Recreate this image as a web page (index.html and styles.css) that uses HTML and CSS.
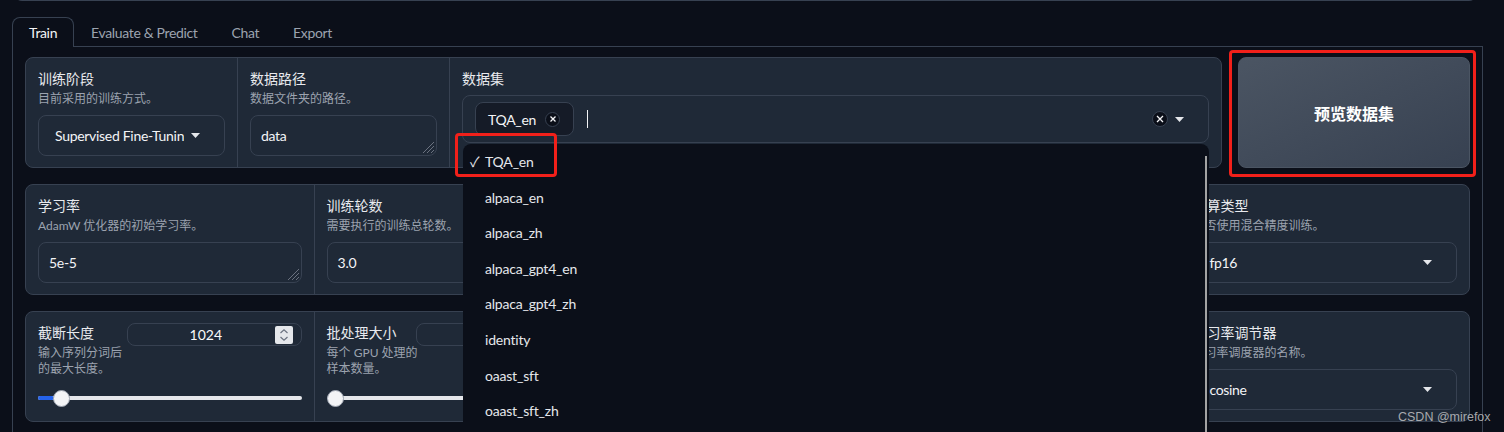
FILE: index.html
```html
<!DOCTYPE html>
<html lang="zh">
<head>
<meta charset="utf-8">
<title>LLaMA Board</title>
<link rel="stylesheet" href="styles.css">
</head>
<body>
<div class="page">
  <div class="topbox"></div>
  <div class="tabnav">
    <div class="tab sel">Train</div>
    <div class="tab">Evaluate &amp; Predict</div>
    <div class="tab">Chat</div>
    <div class="tab">Export</div>
  </div>
  <div class="tabitem">
    <div class="row1">
      <div class="group g1">
        <div class="cell">
          <div class="lbl">训练阶段</div>
          <div class="info">目前采用的训练方式。</div>
          <div class="box dd"><span class="ddtext">Supervised Fine-Tuning</span><svg class="caret" width="9" height="5" viewBox="0 0 9 5"><path d="M0 0h9L4.5 5z"/></svg></div>
        </div>
        <div class="cell">
          <div class="lbl">数据路径</div>
          <div class="info">数据文件夹的路径。</div>
          <div class="box ta">data<svg class="grip" width="11" height="11" viewBox="0 0 11 11"><path d="M11 0L0 11M11 4L4 11M11 8L8 11"/></svg></div>
        </div>
        <div class="cell">
          <div class="lbl">数据集</div>
          <div class="msel">
            <div class="mbox">
              <span class="pill">TQA_en<span class="pillx"><svg width="6" height="6" viewBox="0 0 6 6"><path d="M0.5 0.5L5.5 5.5M5.5 0.5L0.5 5.5"/></svg></span></span>
              <span class="cursor"></span>
              <span class="spacer"></span>
              <span class="clear"><svg width="8" height="8" viewBox="0 0 8 8"><path d="M1 1L7 7M7 1L1 7"/></svg></span>
              <svg class="caret" width="9" height="5" viewBox="0 0 9 5"><path d="M0 0h9L4.5 5z"/></svg>
            </div>
            <div class="menu">
              <div class="opt"><span class="chk">✓</span>TQA_en</div>
              <div class="opt"><span class="chk"></span>alpaca_en</div>
              <div class="opt"><span class="chk"></span>alpaca_zh</div>
              <div class="opt"><span class="chk"></span>alpaca_gpt4_en</div>
              <div class="opt"><span class="chk"></span>alpaca_gpt4_zh</div>
              <div class="opt"><span class="chk"></span>identity</div>
              <div class="opt"><span class="chk"></span>oaast_sft</div>
              <div class="opt"><span class="chk"></span>oaast_sft_zh</div>
              <div class="scrollbar"></div>
            </div>
          </div>
        </div>
      </div>
      <button class="btn">预览数据集</button>
    </div>

    <div class="group g5">
      <div class="cell">
        <div class="lbl">学习率</div>
        <div class="info">AdamW 优化器的初始学习率。</div>
        <div class="box ta">5e-5<svg class="grip" width="11" height="11" viewBox="0 0 11 11"><path d="M11 0L0 11M11 4L4 11M11 8L8 11"/></svg></div>
      </div>
      <div class="cell">
        <div class="lbl">训练轮数</div>
        <div class="info">需要执行的训练总轮数。</div>
        <div class="box ta">3.0<svg class="grip" width="11" height="11" viewBox="0 0 11 11"><path d="M11 0L0 11M11 4L4 11M11 8L8 11"/></svg></div>
      </div>
      <div class="cell">
        <div class="lbl">最大梯度范数</div>
        <div class="info">用于梯度裁剪的范数。</div>
        <div class="box ta">1.0</div>
      </div>
      <div class="cell">
        <div class="lbl">最大样本数</div>
        <div class="info">每个数据集的最大样本数。</div>
        <div class="box ta">100000</div>
      </div>
      <div class="cell">
        <div class="lbl">计算类型</div>
        <div class="info">是否使用混合精度训练。</div>
        <div class="box dd"><span class="ddtext">fp16</span><svg class="caret" width="9" height="5" viewBox="0 0 9 5"><path d="M0 0h9L4.5 5z"/></svg></div>
      </div>
    </div>

    <div class="group g5">
      <div class="cell">
        <div class="shead">
          <div class="stext">
            <div class="lbl">截断长度</div>
            <div class="info"><span class="ln">输入序列分词后</span><span class="ln">的最大长度。</span></div>
          </div>
          <div class="num">1024<span class="spin"><svg width="18" height="18" viewBox="0 0 18 18"><path d="M5.5 7L9 3.8L12.5 7M5.5 11L9 14.2L12.5 11"/></svg></span></div>
        </div>
        <div class="slider"><div class="track"></div><div class="fill" style="width:16px"></div><div class="thumb" style="left:15px"></div></div>
      </div>
      <div class="cell">
        <div class="shead">
          <div class="stext">
            <div class="lbl">批处理大小</div>
            <div class="info"><span class="ln">每个 GPU 处理的</span><span class="ln">样本数量。</span></div>
          </div>
          <div class="num">2<span class="spin"><svg width="18" height="18" viewBox="0 0 18 18"><path d="M5.5 7L9 3.8L12.5 7M5.5 11L9 14.2L12.5 11"/></svg></span></div>
        </div>
        <div class="slider"><div class="track"></div><div class="fill" style="width:0px"></div><div class="thumb" style="left:0px"></div></div>
      </div>
      <div class="cell">
        <div class="shead">
          <div class="stext">
            <div class="lbl">梯度累积</div>
            <div class="info"><span class="ln">梯度累积的步数。</span></div>
          </div>
          <div class="num">4<span class="spin"><svg width="18" height="18" viewBox="0 0 18 18"><path d="M5.5 7L9 3.8L12.5 7M5.5 11L9 14.2L12.5 11"/></svg></span></div>
        </div>
        <div class="slider"><div class="track"></div><div class="fill" style="width:10px"></div><div class="thumb" style="left:6px"></div></div>
      </div>
      <div class="cell">
        <div class="shead">
          <div class="stext">
            <div class="lbl">验证集比例</div>
            <div class="info"><span class="ln">验证集占全部样本</span><span class="ln">的百分比。</span></div>
          </div>
          <div class="num">0<span class="spin"><svg width="18" height="18" viewBox="0 0 18 18"><path d="M5.5 7L9 3.8L12.5 7M5.5 11L9 14.2L12.5 11"/></svg></span></div>
        </div>
        <div class="slider"><div class="track"></div><div class="fill" style="width:0px"></div><div class="thumb" style="left:0px"></div></div>
      </div>
      <div class="cell">
        <div class="lbl">学习率调节器</div>
        <div class="info">学习率调度器的名称。</div>
        <div class="box dd"><span class="ddtext">cosine</span><svg class="caret" width="9" height="5" viewBox="0 0 9 5"><path d="M0 0h9L4.5 5z"/></svg></div>
      </div>
    </div>
  </div>
</div>
<div class="mark m1"></div>
<div class="mark m2"></div>
<div class="wm">CSDN @mirefox</div>
</body>
</html>
```

FILE: styles.css
```css
* { box-sizing: border-box; }

html, body {
  margin: 0;
  padding: 0;
  background: #0b0f19;
}

body {
  position: relative;
  width: 1504px;
  height: 432px;
  overflow: hidden;
  font-family: Lato, "Noto Sans CJK SC", sans-serif;
  font-size: 14px;
  color: #e5e7eb;
}

.page {
  width: 1471px;
  height: 432px;
  margin-left: 12px;
  overflow: hidden;
}

.topbox {
  height: 10px;
  margin-top: -9px;
  margin-right: 6px;
  margin-left: 2px;
  border: 1px solid #374151;
  border-top: none;
  border-radius: 0 0 8px 8px;
}

/* tabs */
.tabnav {
  display: flex;
  height: 30px;
  margin-top: 16px;
  border-bottom: 1px solid #374151;
}

.tab {
  height: 30px;
  padding: 1px 16px 0;
  line-height: 28px;
  border: 1px solid transparent;
  border-bottom: none;
  border-radius: 8px 8px 0 0;
  color: #9ca3af;
  font-size: 14px;
  letter-spacing: -0.35px;
}

.tab.sel {
  position: relative;
  z-index: 1;
  height: 30px;
  border-color: #374151;
  background: #0b0f19;
  color: #f3f4f6;
}

.tabitem {
  display: flex;
  flex-direction: column;
  gap: 16px;
  padding: 10px 12px 12px;
  border: 1px solid #374151;
  border-top: none;
  height: 420px;
}

/* rows */
.row1 {
  display: flex;
  gap: 16px;
}

.group {
  display: grid;
  background: #1f2937;
  border: 1px solid #374151;
  border-radius: 8px;
}

.g1 {
  width: 1197px;
  grid-template-columns: 212px 212px 1fr;
}

.g5 {
  grid-template-columns: repeat(5, 1fr);
}

.cell {
  padding: 11px 12px 11px;
  border-right: 1px solid #374151;
  min-width: 0;
}

.cell:last-child {
  border-right: none;
}

.lbl {
  font-size: 14px;
  line-height: 20px;
  color: #e8eaee;
  white-space: nowrap;
}

.info {
  margin-top: 2px;
  font-size: 12px;
  line-height: 16px;
  color: #9ca3af;
  white-space: nowrap;
}

.ln { display: block; }

.box {
  position: relative;
  height: 41px;
  margin-top: 8px;
  border: 1px solid #374151;
  border-radius: 8px;
  background: #1f2937;
  color: #f3f4f6;
  font-size: 14px;
  letter-spacing: -0.3px;
  display: flex;
  align-items: center;
}

.ta {
  padding: 0 10px;
}

.grip {
  position: absolute;
  right: 2px;
  bottom: 2px;
}

.grip path {
  stroke: #6b7280;
  stroke-width: 1;
  fill: none;
}

.dd {
  padding: 0 24px 0 16px;
}

.ddtext {
  flex: 1;
  overflow: hidden;
  white-space: nowrap;
  margin-right: 7px;
}

.caret {
  flex: none;
}

.caret path {
  fill: #e5e7eb;
}

/* multiselect */
.msel {
  position: relative;
  margin-top: 6px;
}

.mbox {
  height: 48px;
  border: 1px solid #374151;
  border-radius: 8px;
  background: #1f2937;
  display: flex;
  align-items: center;
  padding: 0 24px 0 12px;
}

.pill {
  display: flex;
  align-items: center;
  height: 34px;
  padding: 0 13px 0 12px;
  border: 1px solid #374151;
  border-radius: 8px;
  background: #151b27;
  color: #f3f4f6;
  letter-spacing: -0.3px;
}

.pillx {
  width: 15px;
  height: 15px;
  margin-left: 9px;
  border-radius: 50%;
  background: #0b0f19;
  border: 1px solid #374151;
  display: flex;
  align-items: center;
  justify-content: center;
}

.pillx path, .clear path {
  stroke: #f3f4f6;
  stroke-width: 1.3;
  fill: none;
}

.cursor {
  width: 1px;
  height: 18px;
  margin-left: 13px;
  background: #f3f4f6;
}

.spacer { flex: 1; }

.clear {
  width: 16px;
  height: 16px;
  margin-right: 7px;
  border-radius: 50%;
  background: #0b0f19;
  border: 1px solid #374151;
  display: flex;
  align-items: center;
  justify-content: center;
}

.menu {
  position: absolute;
  z-index: 10;
  top: calc(100% + 1px);
  left: 1px;
  right: 0;
  height: 300px;
  background: #0b0f19;
  border-radius: 8px 8px 0 0;
  overflow: hidden;
}

.opt {
  height: 35.6px;
  line-height: 35.6px;
  padding-left: 7px;
  color: #e5e7eb;
  font-size: 14px;
  letter-spacing: -0.2px;
  white-space: nowrap;
}

.chk {
  display: inline-block;
  width: 15px;
}

.scrollbar {
  position: absolute;
  right: 2px;
  top: 12px;
  width: 2px;
  height: 400px;
  background: #a3a3a3;
}

/* button */
.btn {
  flex: 1;
  border: 1px solid #4b5563;
  border-radius: 8px;
  background: linear-gradient(to bottom right, #4b5563, #374151);
  color: #ffffff;
  font-family: Lato, "Noto Sans CJK SC", sans-serif;
  font-size: 16px;
  font-weight: 700;
}

/* slider blocks */
.shead {
  display: flex;
  align-items: flex-start;
}

.stext {
  width: 89px;
  flex: none;
}

.num {
  position: relative;
  flex: 1;
  height: 23px;
  border: 1px solid #374151;
  border-radius: 8px;
  background: #1f2937;
  color: #f9fafb;
  font-size: 14px;
  line-height: 21px;
  text-align: center;
  padding-right: 17px;
}

.spin {
  position: absolute;
  right: 8px;
  top: 2px;
  width: 18px;
  height: 18px;
  background: #e5e7eb;
  border-radius: 2px;
  display: flex;
}

.spin path {
  stroke: #6b7280;
  stroke-width: 1.2;
  fill: none;
}

.slider {
  position: relative;
  height: 17px;
  margin-top: 13px;
}

.track {
  position: absolute;
  left: 0;
  right: 0;
  top: 6px;
  height: 4px;
  border-radius: 2px;
  background: #e5e7eb;
}

.fill {
  position: absolute;
  left: 0;
  top: 6px;
  height: 4px;
  border-radius: 2px;
  background: #2563eb;
}

.thumb {
  position: absolute;
  top: 0;
  width: 17px;
  height: 17px;
  border-radius: 50%;
  background: #f3f4f6;
  border: 1px solid #9ca3af;
}

/* annotations */
.mark {
  position: absolute;
  z-index: 20;
  border: 3px solid #f2201a;
  border-radius: 4px;
}

.m1 {
  left: 455px;
  top: 133px;
  width: 102px;
  height: 44px;
}

.m2 {
  left: 1229px;
  top: 50px;
  width: 247px;
  height: 127px;
}

.wm {
  position: absolute;
  z-index: 20;
  left: 1398px;
  top: 409px;
  font-family: "Liberation Sans", sans-serif;
  font-size: 12.5px;
  line-height: 16px;
  color: rgba(215, 215, 215, 0.75);
}
```
